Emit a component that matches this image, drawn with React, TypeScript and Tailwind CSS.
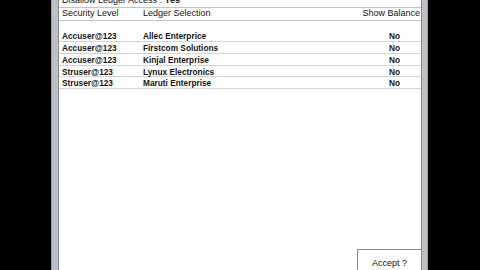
import React from "react";

const rows = [
  { lvl: "Accuser@123", ledger: "Allec Enterprice", bal: "No", h: "h-[12px]" },
  { lvl: "Accuser@123", ledger: "Firstcom Solutions", bal: "No", h: "h-[12px]" },
  { lvl: "Accuser@123", ledger: "Kinjal Enterprise", bal: "No", h: "h-[12px]" },
  { lvl: "Struser@123", ledger: "Lynux Electronics", bal: "No", h: "h-[11px]" },
  { lvl: "Struser@123", ledger: "Maruti Enterprise", bal: "No", h: "h-[12px]" },
];

export default function App() {
  return (
    <div
      className="flex h-[270px] w-[480px] overflow-hidden bg-black text-[#141414]"
      style={{ fontFamily: '"Liberation Sans", Arial, sans-serif' }}
    >
      <div className="w-[51px] shrink-0" />
      <div className="w-[8px] shrink-0 border-l border-r border-l-[#9a9ea2] border-r-[#868a8e] bg-[#bdc1c5]" />
      <div className="flex w-[362px] shrink-0 flex-col overflow-hidden bg-white">
        <div className="h-[8px] shrink-0 overflow-hidden border-b border-[#c4c4c4]">
          <div className="mt-[-5px] pl-[3px] text-[9px] leading-[11px] whitespace-nowrap">
            Disallow Ledger Access : <span className="font-bold">Yes</span>
          </div>
        </div>
        <div className="flex h-[13px] shrink-0 border-b border-[#c4c4c4] text-[9px] leading-[11px]">
          <div className="w-[84px] shrink-0 pl-[3px]">Security Level</div>
          <div className="flex-1">Ledger Selection</div>
          <div className="pr-[1px] text-right whitespace-nowrap">Show Balance</div>
        </div>
        <div className="h-[9px] shrink-0" />
        {rows.map((r, i) => (
          <div
            key={i}
            className={`flex ${r.h} shrink-0 border-b border-[#d4d4d4] pt-[1px] text-[8.3px] font-bold leading-[10px]`}
          >
            <div className="w-[84px] shrink-0 pl-[3px]">{r.lvl}</div>
            <div className="flex-1">{r.ledger}</div>
            <div className="w-[54px] shrink-0 pl-[1px] text-center">{r.bal}</div>
          </div>
        ))}
        <div className="flex-1" />
        <div className="flex shrink-0 justify-end">
          <div className="mb-[-8px] flex h-[29px] w-[64px] items-center justify-center border border-r-0 border-[#8c8c8c] text-[9px]">
            Accept ?
          </div>
        </div>
      </div>
      <div className="w-[7px] shrink-0 border-l border-r border-l-[#868a8e] border-r-[#9a9ea2] bg-[#bdc1c5]" />
    </div>
  );
}
